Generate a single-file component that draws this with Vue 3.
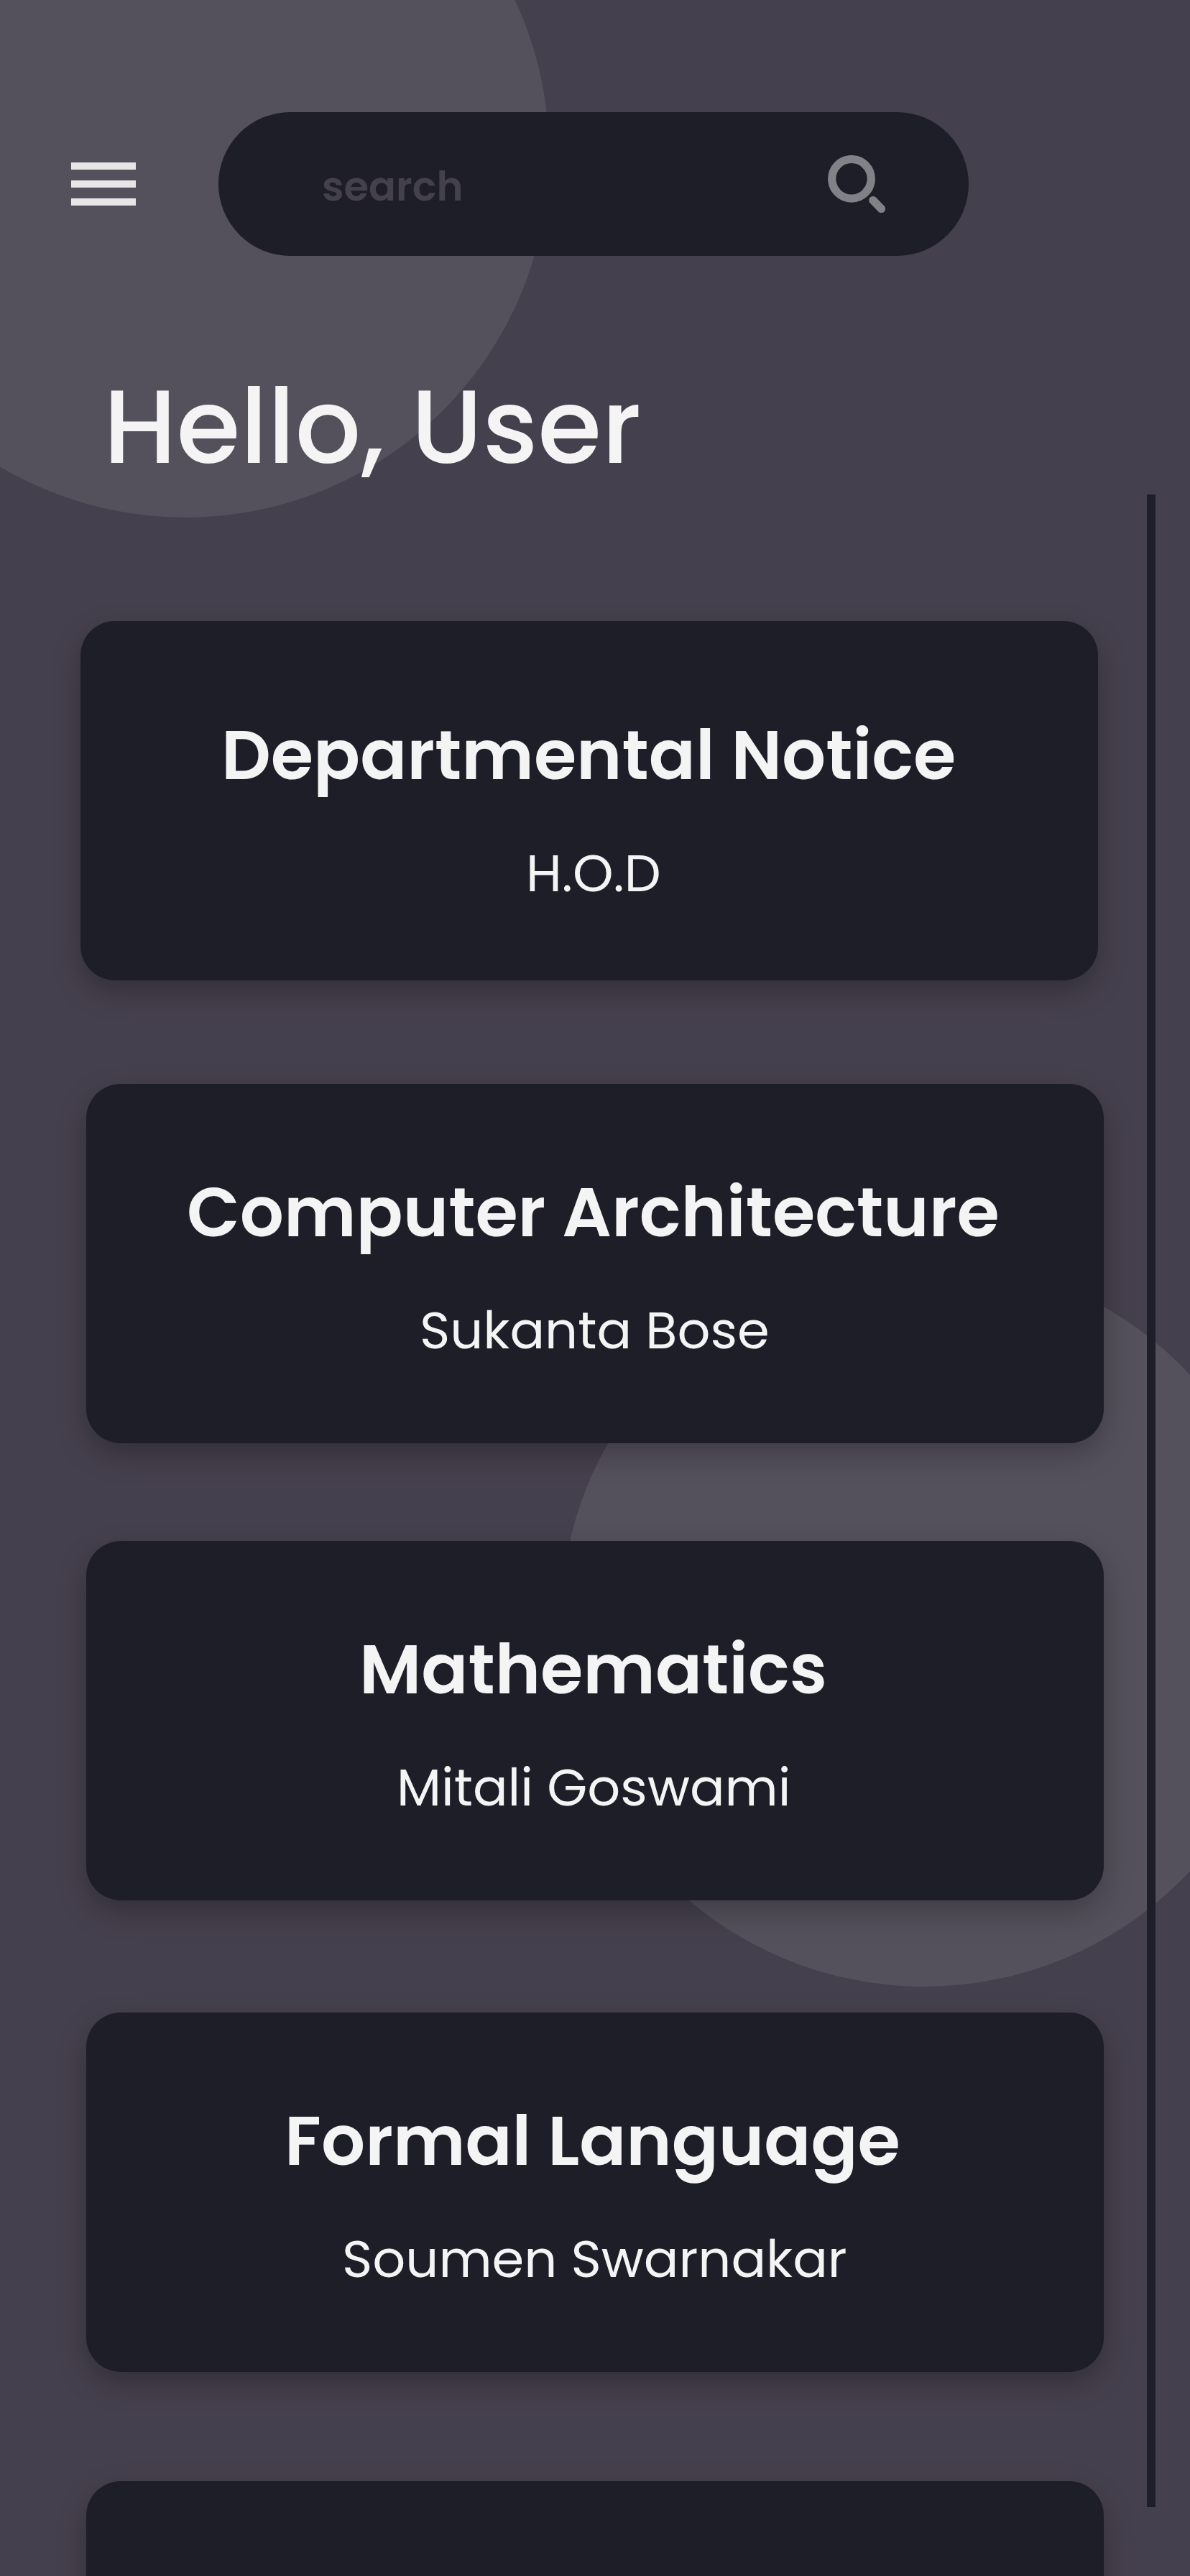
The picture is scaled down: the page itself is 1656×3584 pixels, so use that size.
<script setup>
const notices = [
  { title: 'Departmental Notice', author: 'H.O.D', titleInset: 196, authorInset: 620, lead: true },
  { title: 'Computer Architecture', author: 'Sukanta Bose', titleInset: 140, authorInset: 464, gap: 144 },
  { title: 'Mathematics', author: 'Mitali Goswami', titleInset: 380, authorInset: 432, gap: 136 },
  { title: 'Formal Language', author: 'Soumen Swarnakar', titleInset: 276, authorInset: 356, gap: 156 },
  { title: '', author: '', titleInset: 0, authorInset: 0, gap: 152 },
]
</script>

<template>
  <div class="screen">
    <span class="bubble bubble-top"></span>
    <span class="bubble bubble-side"></span>

    <div class="content">
      <header class="topbar">
        <button class="menu" type="button" aria-label="Menu">
          <span class="menu-bar"></span>
          <span class="menu-bar"></span>
          <span class="menu-bar"></span>
        </button>
        <div class="search">
          <span class="search-label">search</span>
          <svg class="search-icon" viewBox="0 0 80 80" width="80" height="80" fill="none" stroke="#828188">
            <circle cx="33" cy="32.8" r="27.3" stroke-width="11.2" />
            <path d="M62.8 62.6 L74.4 74.5" stroke-width="11.4" stroke-linecap="round" />
          </svg>
        </div>
      </header>

      <h1 class="greeting">Hello, User</h1>

      <main class="notices">
        <article
          v-for="(notice, i) in notices"
          :key="i"
          class="card"
          :class="{ lead: notice.lead }"
          :style="{ marginTop: (notice.gap || 0) + 'px' }"
        >
          <h2 v-if="notice.title" class="card-title" :style="{ paddingLeft: notice.titleInset + 'px' }">{{ notice.title }}</h2>
          <p v-if="notice.author" class="card-author" :style="{ paddingLeft: notice.authorInset + 'px' }">{{ notice.author }}</p>
        </article>
      </main>
    </div>

    <span class="scrollbar"></span>
  </div>
</template>

<style>
body {
  background: #45404d;
}
</style>

<style scoped>
.screen {
  position: relative;
  box-sizing: border-box;
  width: 1656px;
  height: 3584px;
  overflow: hidden;
  background: #45404d;
  color: #f4f4f4;
  font-family: Poppins, Inter, sans-serif;
}

.bubble {
  position: absolute;
  width: 1012px;
  height: 1012px;
  border-radius: 50%;
  background: #55515c;
}

.bubble-top {
  left: -248px;
  top: -292px;
}

.bubble-side {
  left: 780px;
  top: 1752px;
}

.content {
  position: relative;
  padding-top: 156px;
}

.topbar {
  display: flex;
  align-items: center;
  gap: 115px;
  padding-left: 99px;
}

.menu {
  display: flex;
  flex-direction: column;
  gap: 15px;
  width: 90px;
  padding: 0;
  border: 0;
  background: none;
}

.menu-bar {
  height: 10px;
  background: #e6e6e6;
}

.search {
  box-sizing: border-box;
  display: flex;
  align-items: center;
  justify-content: space-between;
  width: 1044px;
  height: 200px;
  padding: 0 116px 0 144px;
  border-radius: 100px;
  background: #1e1e29;
}

.search-label {
  padding-top: 8px;
  color: #45404d;
  font-size: 56px;
  font-weight: 600;
  line-height: 84px;
}

.search-icon {
  display: block;
}

.greeting {
  margin: 130px 0 0 144px;
  font-size: 144px;
  font-weight: 500;
  line-height: 216px;
}

.notices {
  display: flex;
  flex-direction: column;
  padding: 162px 0 0 120px;
}

.card {
  box-sizing: border-box;
  flex: none;
  width: 1416px;
  height: 500px;
  padding-top: 107px;
  border-radius: 48px;
  background: #1e1e29;
  box-shadow: 0 16px 40px rgba(0, 0, 0, 0.25);
}

.card.lead {
  margin-left: -8px;
  padding-top: 115px;
}

.card-title {
  margin: 0;
  font-size: 96px;
  font-weight: 600;
  line-height: 144px;
  white-space: nowrap;
}

.card-author {
  margin: 38px 0 0;
  font-size: 72px;
  font-weight: 400;
  line-height: 108px;
  white-space: nowrap;
}

.scrollbar {
  position: absolute;
  left: 1596px;
  top: 688px;
  width: 12px;
  height: 2800px;
  background: #1e1e29;
}
</style>
